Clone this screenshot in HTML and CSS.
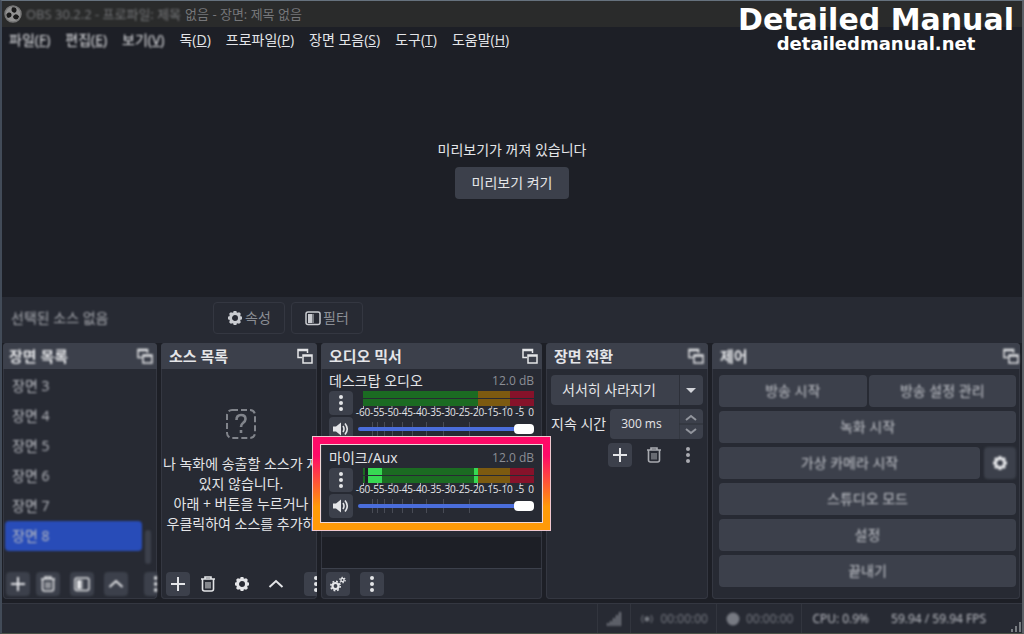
FILE: index.html
```
<!DOCTYPE html>
<html lang="ko">
<head>
<meta charset="utf-8">
<meta name="viewport" content="width=device-width, initial-scale=1">
<title>OBS 30.2.2</title>
<link rel="stylesheet" href="styles.css">
</head>
<body>
<svg class="defs" aria-hidden="true">
  <symbol id="popout" viewBox="0 0 16 16"><path d="M5 9.500H1V1.500h9.500V5M1 2.500h9.500" fill="none" stroke="currentColor" stroke-width="1.500"/><path d="M6 7h9v8H6zM6 8h9" fill="none" stroke="currentColor" stroke-width="1.500"/></symbol>
  <symbol id="plus" viewBox="0 0 16 16"><path d="M8 1v14M1 8h14" fill="none" stroke="currentColor" stroke-width="2"/></symbol>
  <symbol id="trash" viewBox="0 0 16 16"><path d="M1 3h14M5 2.500V1h6v1.500M2.500 3.500V13q0 2 2 2h7q2 0 2-2V3.500" fill="none" stroke="currentColor" stroke-width="1.600"/><path d="M6 6v6.500M8 6v6.500M10 6v6.500" stroke="currentColor" stroke-width="1"/></symbol>
  <symbol id="gear" viewBox="0 0 16 16"><circle cx="8" cy="8" r="4.500" fill="none" stroke="currentColor" stroke-width="3"/><path d="M8 1v3M8 12v3M1 8h3M12 8h3M3 3l2 2M11 11l2 2M3 13l2-2M11 5l2-2" stroke="currentColor" stroke-width="3"/></symbol>
  <symbol id="gears" viewBox="0 0 16 16"><circle cx="5.500" cy="10" r="3" fill="none" stroke="currentColor" stroke-width="2.200"/><circle cx="5.500" cy="10" r="4.700" fill="none" stroke="currentColor" stroke-width="1.600" stroke-dasharray="1.850 1.840"/><circle cx="12.500" cy="4" r="1.600" fill="none" stroke="currentColor" stroke-width="1.400"/><circle cx="12.500" cy="4" r="2.700" fill="none" stroke="currentColor" stroke-width="1.200" stroke-dasharray="1.400 1.427"/></symbol>
  <symbol id="filter" viewBox="0 0 16 16"><rect x="1" y="2" width="14" height="12.500" rx="2" fill="none" stroke="currentColor" stroke-width="1.500"/><path d="M3 4h4v9H3z" fill="currentColor"/><path d="M7 4h2v9H7z" fill="currentColor" opacity=".5"/></symbol>
  <symbol id="up" viewBox="0 0 16 16"><path d="M1.500 11L8 5l6.500 6" fill="none" stroke="currentColor" stroke-width="2"/></symbol>
  <symbol id="dots" viewBox="0 0 16 16"><circle cx="8" cy="2" r="2" fill="currentColor"/><circle cx="8" cy="8" r="2" fill="currentColor"/><circle cx="8" cy="14" r="2" fill="currentColor"/></symbol>
  <symbol id="speaker" viewBox="0 0 16 16"><path d="M0 5.500h3L8 1.500v13l-5-4H0z" fill="currentColor"/><path d="M10 5q2 3 0 6M12 2.500q4.500 5.500 0 11" fill="none" stroke="currentColor" stroke-width="1.600"/></symbol>
  <symbol id="slider-ticks" viewBox="0 0 176 16"><path d="M14.500 1v14M19.500 1v14M26.500 1v14M34.500 1v14M44.500 1v14M54.500 1v14M68.500 1v14M85.500 1v14M111.500 1v14" stroke="#484b55"/></symbol>
</svg>

<header class="titlebar">
  <svg class="obs" viewBox="0 0 18 18" aria-hidden="true"><circle cx="9" cy="9" r="8" fill="#929292" stroke="#777" stroke-width="1.500"/><g fill="#191919"><path d="M8 2.500q5-1 4.500 3.500-1 2.500-3 1.500-3-1-1.500-5z"/><path d="M8 2.500q5-1 4.500 3.500-1 2.500-3 1.500-3-1-1.500-5z" transform="rotate(120 9 9)"/><path d="M8 2.500q5-1 4.500 3.500-1 2.500-3 1.500-3-1-1.500-5z" transform="rotate(240 9 9)"/></g></svg>
  <span class="soft">OBS 30.2.2 - 프로파일: 제목</span><span>없음 - 장면: 제목 없음</span>
</header>
<div class="watermark"><div class="brand">Detailed Manual</div><div class="site">detailedmanual.net</div></div>

<nav class="menu">
  <button class="soft">파일(<u>F</u>)</button><button class="soft">편집(<u>E</u>)</button><button class="soft">보기(<u>V</u>)</button><button>독(<u>D</u>)</button><button>프로파일(<u>P</u>)</button><button>장면 모음(<u>S</u>)</button><button>도구(<u>T</u>)</button><button>도움말(<u>H</u>)</button>
</nav>

<main class="preview">
  <p>미리보기가 꺼져 있습니다</p>
  <button class="btn enable">미리보기 켜기</button>
</main>

<section class="source-bar">
  <span class="none soft">선택된 소스 없음</span>
  <button><svg><use href="#gear"/></svg>속성</button>
  <button><svg><use href="#filter"/></svg>필터</button>
</section>

<div class="docks">
  <section class="dock scenes">
    <header><h2 class="soft">장면 목록</h2><button class="pop soft" aria-label="분리"><svg><use href="#popout"/></svg></button></header>
    <div class="scene-area soft">
      <ul><li>장면 3</li><li>장면 4</li><li>장면 5</li><li>장면 6</li><li>장면 7</li><li class="selected">장면 8</li></ul>
      <div class="scrollbar"></div>
    </div>
    <footer class="soft">
      <button class="tool filled" aria-label="추가"><svg><use href="#plus"/></svg></button>
      <button class="tool filled" aria-label="삭제"><svg><use href="#trash"/></svg></button>
      <button class="tool filled spaced" aria-label="필터"><svg><use href="#filter"/></svg></button>
      <button class="tool filled spaced" aria-label="위로"><svg><use href="#up"/></svg></button>
      <button class="tool filled last" aria-label="더 보기"><svg><use href="#dots"/></svg></button>
    </footer>
  </section>

  <section class="dock sources">
    <header><h2>소스 목록</h2><button class="pop" aria-label="분리"><svg><use href="#popout"/></svg></button></header>
    <div class="empty">
      <svg viewBox="0 0 30 30" aria-hidden="true"><rect x="1" y="1" width="28" height="28" rx="5" fill="none" stroke="currentColor" stroke-width="2" stroke-dasharray="6 3"/><path d="M10.500 11q0-5 4.500-5t4.500 4q0 2-2.500 4-2 1.500-2 4M15 21v3" fill="none" stroke="currentColor" stroke-width="2.600"/></svg>
      <p>나 녹화에 송출할 소스가 지<br>있지 않습니다.<br>아래 + 버튼을 누르거나<br>우클릭하여 소스를 추가하</p>
    </div>
    <footer>
      <button class="tool filled" aria-label="추가"><svg><use href="#plus"/></svg></button>
      <button class="tool" aria-label="삭제"><svg><use href="#trash"/></svg></button>
      <button class="tool spaced" aria-label="설정"><svg><use href="#gear"/></svg></button>
      <button class="tool spaced" aria-label="위로"><svg><use href="#up"/></svg></button>
      <button class="tool filled last" aria-label="더 보기"><svg><use href="#dots"/></svg></button>
    </footer>
  </section>

  <section class="dock mixer">
    <header><h2>오디오 믹서</h2><button class="pop" aria-label="분리"><svg><use href="#popout"/></svg></button></header>
    <div class="channels">
      <div class="channel">
        <div class="name"><label for="desktop">데스크탑 오디오</label><span>12.0 dB</span></div>
        <button class="tool filled" aria-label="채널 메뉴"><svg><use href="#dots"/></svg></button>
        <div class="meter">
          <div class="bars"></div>
          <div class="scale"><span>-60</span><span>-55</span><span>-50</span><span>-45</span><span>-40</span><span>-35</span><span>-30</span><span>-25</span><span>-20</span><span>-15</span><span>-10</span><span>-5</span><span class="zero">0</span></div>
        </div>
        <button class="tool filled" aria-label="음소거"><svg><use href="#speaker"/></svg></button>
        <div class="volume"><svg viewBox="0 0 176 16" preserveAspectRatio="none"><use href="#slider-ticks"/></svg><input id="desktop" type="range" value="100"></div>
      </div>
      <div class="channel highlighted">
        <div class="name"><label for="mic">마이크/Aux</label><span>12.0 dB</span></div>
        <button class="tool filled" aria-label="채널 메뉴"><svg><use href="#dots"/></svg></button>
        <div class="meter">
          <div class="bars live"></div>
          <div class="scale"><span>-60</span><span>-55</span><span>-50</span><span>-45</span><span>-40</span><span>-35</span><span>-30</span><span>-25</span><span>-20</span><span>-15</span><span>-10</span><span>-5</span><span class="zero">0</span></div>
        </div>
        <button class="tool filled" aria-label="음소거"><svg><use href="#speaker"/></svg></button>
        <div class="volume"><svg viewBox="0 0 176 16" preserveAspectRatio="none"><use href="#slider-ticks"/></svg><input id="mic" type="range" value="100"></div>
      </div>
    </div>
    <footer>
      <button class="tool filled" aria-label="고급 오디오 설정"><svg><use href="#gears"/></svg></button>
      <button class="tool filled spaced" aria-label="더 보기"><svg><use href="#dots"/></svg></button>
    </footer>
  </section>

  <section class="dock transitions">
    <header><h2>장면 전환</h2><button class="pop soft" aria-label="분리"><svg><use href="#popout"/></svg></button></header>
    <div class="form">
      <div class="combo"><select aria-label="장면 전환"><option>서서히 사라지기</option></select><svg viewBox="0 0 24 30" aria-hidden="true"><path d="M0 0v30" stroke="#2d3039" stroke-width="2"/><path d="M7 13h10l-5 5z" fill="#d2d4d9"/></svg></div>
      <div class="duration"><label for="dur">지속 시간</label><div class="spin"><input id="dur" value="300 ms"><svg viewBox="0 0 24 30" aria-hidden="true"><path d="M0 0v30M0 15h24" stroke="#2d3039"/><path d="M7 11l5-4 5 4M7 20l5 4 5-4" fill="none" stroke="#92959d" stroke-width="2"/></svg></div></div>
      <div class="actions"><button class="tool filled" aria-label="추가"><svg><use href="#plus"/></svg></button><button class="tool dim" aria-label="삭제"><svg><use href="#trash"/></svg></button><button class="tool dim" aria-label="더 보기"><svg><use href="#dots"/></svg></button></div>
    </div>
  </section>

  <section class="dock controls">
    <header><h2 class="soft">제어</h2><button class="pop soft" aria-label="분리"><svg><use href="#popout"/></svg></button></header>
    <div class="stack">
      <div class="pair"><button class="btn"><span class="soft">방송 시작</span></button><button class="btn"><span class="soft">방송 설정 관리</span></button></div>
      <button class="btn"><span class="soft">녹화 시작</span></button>
      <div class="camera"><button class="btn"><span class="soft">가상 카메라 시작</span></button><button class="btn cog soft" aria-label="가상 카메라 설정"><svg><use href="#gear"/></svg></button></div>
      <button class="btn"><span class="soft">스튜디오 모드</span></button>
      <button class="btn"><span class="soft">설정</span></button>
      <button class="btn"><span class="soft">끝내기</span></button>
    </div>
  </section>
</div>

<footer class="status">
  <div class="cell"><svg class="soft" viewBox="0 0 16 16"><path d="M1 12h2v3H1zM4 10h2v5H4zM7 7h2v8H7zM10 4h2v11h-2zM13 1h2v14h-2z" fill="currentColor"/></svg></div>
  <div class="cell time"><svg class="soft" viewBox="0 0 16 16"><circle cx="8" cy="8" r="2.500" fill="currentColor"/><path d="M4 4q-3 4 0 8M12 4q3 4 0 8" fill="none" stroke="currentColor" stroke-width="1"/></svg><span class="soft">00:00:00</span></div>
  <div class="cell time"><svg class="soft" viewBox="0 0 16 16"><circle cx="8" cy="8" r="6.500" fill="currentColor"/></svg><span class="soft">00:00:00</span></div>
  <div class="cell cpu"><span class="soft">CPU: 0.9%</span></div>
  <div class="cell fps"><span class="soft">59.94 / 59.94 FPS</span></div>
  <svg class="grip" viewBox="0 0 12 12" aria-hidden="true"><path d="M9 1h2v10H9zM5 5h2v6H5zM1 8h2v3H1z" fill="#777b80"/></svg>
</footer>
</body>
</html>
```
FILE: styles.css
```
* { box-sizing: border-box; }
body {
  margin: 0;
  min-height: 100vh;
  display: flex;
  flex-direction: column;
  position: relative;
  background: #1d1f26;
  color: #e4e5e8;
  font: 14px/20px "Open Sans", "Noto Sans CJK KR", sans-serif;
  border-top: 1px solid #66727e;
  border-left: 2px solid #424b58;
  border-right: 2px solid #5b6066;
  border-bottom: 1px solid #4b5348;
}
h2, p, ul { margin: 0; padding: 0; }
ul { list-style: none; }
button, input, select { font: inherit; color: inherit; border: 0; padding: 0; margin: 0; background: none; }
svg { display: block; width: 16px; height: 16px; flex: none; }
.defs { position: absolute; width: 0; height: 0; }
.soft { filter: blur(1px); }

.titlebar {
  display: flex;
  align-items: center;
  gap: 4px;
  height: 26px;
  padding: 0 2px;
  background: #2a2b2b;
  color: #76777a;
  font-size: 13px;
}
.titlebar .obs { width: 18px; height: 18px; }
.watermark {
  position: absolute;
  top: 3px;
  right: 8px;
  text-align: center;
  color: #fff;
  font-family: "DejaVu Sans", sans-serif;
  font-weight: bold;
}
.brand { font-size: 30px; line-height: 32px; }
.site { font-size: 18px; line-height: 16px; }

.menu { display: flex; gap: 15px; height: 25px; padding: 0 7px; align-items: center; }

.preview {
  flex: 1;
  display: flex;
  flex-direction: column;
  align-items: center;
  justify-content: center;
  gap: 7px;
  padding-bottom: 11px;
}
.btn { height: 32px; border-radius: 4px; background: #3c404b; }
.enable { padding: 0 17px; }

.source-bar {
  display: flex;
  align-items: center;
  gap: 6px;
  height: 46px;
  padding: 0 9px 5px;
  background: #272a33;
}
.source-bar .none { width: 196px; color: #a9abb1; }
.source-bar button {
  display: flex;
  align-items: center;
  justify-content: center;
  gap: 2px;
  width: 72px;
  height: 32px;
  border: 1px solid #343741;
  border-radius: 4px;
  color: #8b8e95;
}
.source-bar svg { color: #c9cbd0; }

.docks {
  display: grid;
  grid-template-columns: minmax(0, 154fr) minmax(0, 156fr) minmax(0, 221fr) minmax(0, 162fr) minmax(0, 308fr);
  gap: 4px;
  padding: 0 2px 4px 1px;
}
.dock {
  display: flex;
  flex-direction: column;
  background: #272a33;
  border-radius: 4px;
  box-shadow: inset 0 0 0 1px #343741;
}
.dock > header {
  display: flex;
  align-items: center;
  justify-content: space-between;
  height: 26px;
  padding: 0 4px 0 8px;
  background: #3c404b;
  border-radius: 4px 4px 0 0;
}
.scenes > header { padding-left: 6px; }
.controls > header { padding-right: 1px; }
h2 { font-size: 15px; line-height: 20px; }
.dock > footer {
  display: flex;
  align-items: center;
  gap: 6px;
  height: 31px;
  padding-left: 5px;
  overflow: hidden;
}
.tool {
  display: flex;
  align-items: center;
  justify-content: center;
  flex: none;
  width: 24px;
  height: 24px;
  border-radius: 4px;
}
.filled { background: #3c404b; }
.spaced { margin-left: 4px; }
.last { margin-left: 10px; }

.scene-area { flex: 1; display: flex; align-items: flex-end; gap: 3px; padding: 2px 6px 4px 2px; }
.scene-area ul { flex: 1; align-self: flex-start; }
.scene-area li { line-height: 30px; padding-left: 7px; color: #b8bac0; }
.scene-area .selected { background: #284cb8; border-radius: 4px; }
.scrollbar { width: 6px; height: 34px; border-radius: 3px; background: #3c404b; }
.scenes > footer { padding-left: 3px; }

.empty { flex: 1; display: flex; flex-direction: column; align-items: center; gap: 15px; padding: 40px 0 0 4px; overflow: hidden; }
.empty svg { width: 30px; height: 30px; color: #81848b; }
.empty p { white-space: nowrap; text-align: center; }

.channels { flex: 1; margin: 0 1px; background: linear-gradient(#272a33 168px, #1d1f26 0); }
.channel {
  position: relative;
  display: grid;
  grid-template-columns: 24px minmax(0, 1fr);
  column-gap: 5px;
  row-gap: 2px;
  padding: 2px 7px 5px;
}
.name { grid-column: 1 / -1; display: flex; justify-content: space-between; height: 20px; margin-bottom: -2px; }
.name span { font-size: 12px; color: #8b8e95; }
.channel { padding-bottom: 5px; }
.meter { padding-left: 5px; }
.bars {
  height: 15px;
  background:
    linear-gradient(transparent 7px, #272a33 7px, #272a33 8px, transparent 8px),
    linear-gradient(90deg, #1b6b22 67%, #7c5a10 67%, #7c5a10 86%, #86122a 86%);
}
.bars.live {
  background:
    linear-gradient(transparent 7px, #272a33 7px, #272a33 8px, transparent 8px),
    linear-gradient(90deg, #1b6b22 1%, #1d1f26 1%, #1d1f26 3%, #37d853 3%, #37d853 11%, #1b6b22 11%, #1b6b22 65%, #37d853 65%, #37d853 67%, #7c5a10 67%, #7c5a10 86%, #86122a 86%);
}
.scale {
  display: flex;
  justify-content: space-between;
  height: 9px;
  font-size: 10px;
  line-height: 12px;
  background: linear-gradient(90deg, #a9abb1 1px, transparent 1px) 0 0 / calc(100% / 12) 3px repeat-x;
}
.scale span { display: flex; justify-content: center; width: 0; }
.scale .zero { justify-content: flex-end; }
.volume { display: grid; align-items: center; }
.volume > * { grid-area: 1 / 1; width: 100%; }
.volume input { appearance: none; height: 16px; }
.volume input::-webkit-slider-runnable-track { height: 4px; border-radius: 2px; background: #4a6ddb; }
.volume input::-webkit-slider-thumb { appearance: none; width: 20px; height: 10px; margin-top: -3px; border-radius: 4px; background: #fff; }
.highlighted::after {
  content: "";
  position: absolute;
  inset: -9px -9px -7px -9px;
  border: 7px solid;
  border-image: linear-gradient(#ff0a68 20%, #ff9a08 75%) 7;
  outline: 1px solid #f0c8d0;
  pointer-events: none;
}
.highlighted::before {
  content: "";
  position: absolute;
  inset: -2px -2px 0 -2px;
  border: 1px solid #f0d8d8;
  pointer-events: none;
}
.channel { row-gap: 2px; }
.mixer > footer { border-top: 1px solid #3c404b; }

.form { display: grid; gap: 4px; padding: 6px 5px; }
.combo, .spin { display: flex; height: 30px; background: #3c404b; border-radius: 4px; }
.combo select { appearance: none; flex: 1; min-width: 0; padding-left: 11px; }
.combo svg, .spin svg { width: 24px; height: 30px; }
.duration { display: flex; align-items: center; gap: 4px; white-space: nowrap; }
.spin { flex: 1; min-width: 0; font-size: 12px; }
.spin input { flex: 1; min-width: 0; width: 0; padding-left: 11px; }
.actions { display: flex; justify-content: flex-end; gap: 10px; padding-right: 3px; }
.dim { color: #a9abb1; }

.stack { display: grid; gap: 4px; padding: 6px 4px 12px 7px; color: #c2c4ca; }
.stack .soft { display: inline-block; }
.pair { display: grid; grid-template-columns: 1fr 1fr; gap: 2px; }
.camera { display: grid; grid-template-columns: 1fr 32px; gap: 4px; }
.cog { color: #e4e5e8; }
.stack .cog { display: flex; align-items: center; justify-content: center; }

.status {
  display: flex;
  justify-content: flex-end;
  height: 30px;
  background: #272a33;
  border-top: 1px solid #343741;
  font-size: 12px;
  color: #c2c4ca;
}
.cell { display: flex; align-items: center; gap: 5px; padding: 0 8px; border-left: 1px solid #32353e; color: #777a82; }
.cell.cpu { padding: 0 14px 0 10px; color: #c2c4ca; }
.cell.fps { border: 0; padding-right: 24px; color: #c2c4ca; }
.grip { align-self: flex-end; width: 12px; height: 12px; }
```
